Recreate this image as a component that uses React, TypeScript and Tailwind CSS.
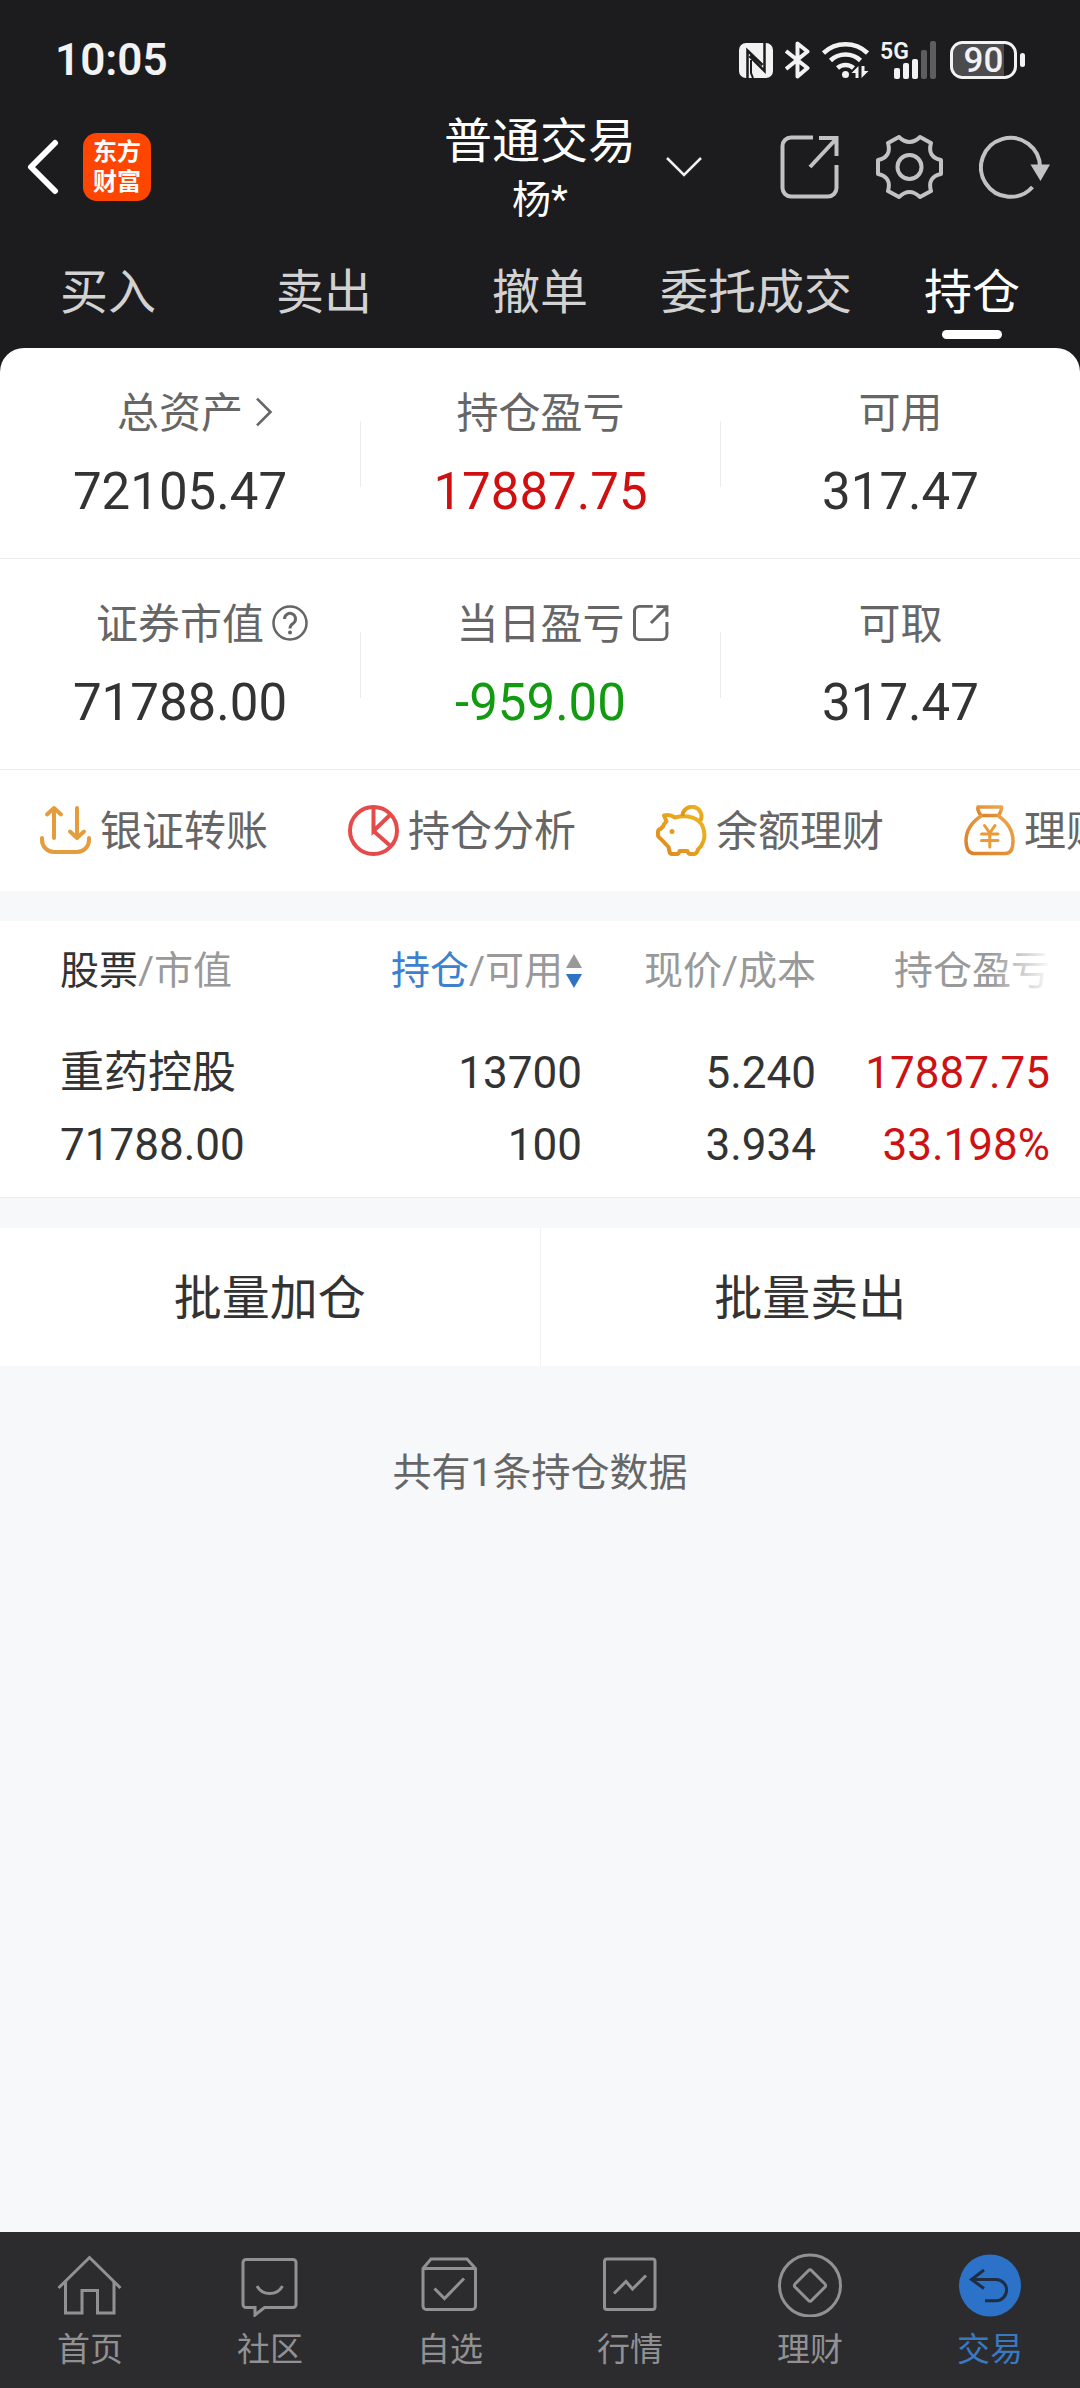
import { useState, type ReactNode } from "react";
import clsx from "clsx";

const tabs = ["买入", "卖出", "撤单", "委托成交", "持仓"];

const summary = [
  [
    { label: "总资产", value: "72105.47", color: "text-[#333]", icon: <ChevronRight /> },
    { label: "持仓盈亏", value: "17887.75", color: "text-[#d01010]", icon: null },
    { label: "可用", value: "317.47", color: "text-[#333]", icon: null },
  ],
  [
    { label: "证券市值", value: "71788.00", color: "text-[#333]", icon: <HelpIcon /> },
    { label: "当日盈亏", value: "-959.00", color: "text-[#129a10]", icon: <ShareIcon className="w-9 h-9 ml-2 mb-1" strokeWidth={5} /> },
    { label: "可取", value: "317.47", color: "text-[#333]", icon: null },
  ],
];

const actions = [
  { label: "银证转账", icon: <TransferIcon /> },
  { label: "持仓分析", icon: <PieIcon /> },
  { label: "余额理财", icon: <PigIcon /> },
  { label: "理财产品", icon: <BagIcon /> },
];

const positions = [
  {
    name: "重药控股",
    marketValue: "71788.00",
    amount: "13700",
    available: "100",
    price: "5.240",
    cost: "3.934",
    profit: "17887.75",
    profitRate: "33.198%",
  },
];

const navItems = [
  {
    label: "首页",
    icon: (
      <>
        <path d="M1.5 35 32.5 4.5 63.5 35" />
        <path d="M8.5 29V60H25V37.5H40.5V60H57V29" />
      </>
    ),
  },
  {
    label: "社区",
    icon: (
      <>
        <path d="M9 6.5H56a3 3 0 0 1 3 3V51.5a3 3 0 0 1-3 3H27.5L18 62V54.5H9a3 3 0 0 1-3-3V9.5a3 3 0 0 1 3-3Z" />
        <path d="M20 33a14.5 14.5 0 0 0 25.5 0" />
      </>
    ),
  },
  {
    label: "自选",
    icon: (
      <>
        <path d="M6 15.5 14 6H50L58.5 15.5V53a3.5 3.5 0 0 1-3.5 3.5H9.5A3.5 3.5 0 0 1 6 53ZM6 15.5H58.5" />
        <path d="M17.5 35.5 27.5 45.5 47 25.5" />
      </>
    ),
  },
  {
    label: "行情",
    icon: (
      <>
        <rect x="7.5" y="6" width="50.5" height="50.5" rx="2.5" />
        <path d="M17 40.5 29 28.5 35.5 36 49 22.5" />
      </>
    ),
  },
  {
    label: "理财",
    icon: (
      <>
        <circle cx="33" cy="32.5" r="30.5" />
        <path d="M31.5 17.5a2 2 0 0 1 3 0L48 31a2 2 0 0 1 0 3L34.5 47.5a2 2 0 0 1-3 0L18 34a2 2 0 0 1 0-3Z" />
      </>
    ),
  },
  {
    label: "交易",
    icon: (
      <>
        <circle cx="33" cy="32.5" r="31" fill="#2b72c8" stroke="none" />
        <path d="M27 17 14.5 26.5 27 35.5M15 26.5H39a10.6 10.6 0 0 1 0 21.2H28" stroke="#1f2d42" />
      </>
    ),
  },
];

function ChevronRight() {
  return (
    <svg viewBox="0 0 16 28" className="w-[18px] h-[30px] ml-3 mb-1" fill="none" stroke="#666" strokeWidth="2.5">
      <path d="M1.5 1.5 14 14 1.5 26.5" />
    </svg>
  );
}

function HelpIcon() {
  return (
    <svg viewBox="0 0 36 36" className="w-9 h-9 ml-2 mb-1" fill="none" stroke="#666" strokeWidth="2.5">
      <circle cx="18" cy="18" r="16.5" />
      <path d="M12.5 14a5.5 5.5 0 1 1 8.5 4.5Q18 20.5 18 23.5" strokeWidth="3" />
      <circle cx="18" cy="27.5" r="2" fill="#666" stroke="none" />
    </svg>
  );
}

function ShareIcon({ className, strokeWidth = 4 }: { className?: string; strokeWidth?: number }) {
  return (
    <svg viewBox="0 0 60 64" preserveAspectRatio="none" className={className} fill="none" stroke="currentColor" strokeWidth={strokeWidth}>
      <path d="M33 2.5H11a8.5 8.5 0 0 0-8.5 8.5V53a8.5 8.5 0 0 0 8.5 8.5H48a8.5 8.5 0 0 0 8.5-8.5V30" />
      <path d="M39 3H56.5V21M56 4 30 32" />
    </svg>
  );
}

function TransferIcon() {
  return (
    <svg viewBox="0 0 51 51" className="w-[51px] h-[51px]" fill="none" stroke="#e59c3c" strokeWidth="4" strokeLinecap="round" strokeLinejoin="round">
      <path d="M2 33v2a12 12 0 0 0 12 12H37a12 12 0 0 0 12-12v-2" />
      <path d="M14 33V3M7 9.5 14 3 21 9.5M37 3V33M30 26.5 37 33 44 26.5" />
    </svg>
  );
}

function PieIcon() {
  return (
    <svg viewBox="0 0 51 51" className="w-[51px] h-[51px]" fill="none" stroke="#e64b4b" strokeWidth="4">
      <circle cx="25.5" cy="25.5" r="23.5" />
      <path d="M25.5 2V26L42.5 9.5M25.5 26 42.5 41" />
    </svg>
  );
}

function PigIcon() {
  return (
    <svg viewBox="0 0 51 51" className="w-[51px] h-[51px]" fill="none" stroke="url(#pig)" strokeWidth="4" strokeLinejoin="round">
      <defs>
        <linearGradient id="pig" x1="1" y1="0" x2="0" y2="1">
          <stop offset="0" stopColor="#ecb820" />
          <stop offset="1" stopColor="#e0871e" />
        </linearGradient>
      </defs>
      <path d="M8 10.5Q14 9 19 12.5 26 10.5 32 11.5 42 13 46 20 50 28 47.5 36 46 41 42 44.5L41.5 46Q40 49 38 49H34.5Q32 49 31.5 46H23.5Q23 49 21 49H16Q14 49 13.5 46.5L12.5 42 4.5 33.5Q2 32 2 30V27Q2 24.5 4.5 24L7 21.5Q8 18.5 10.5 16.5Z" />
      <path d="M26.5 11a9.5 9.5 0 1 1 18 4.5" />
      <circle cx="16" cy="26.5" r="2.5" fill="#e59a20" stroke="none" />
    </svg>
  );
}

function BagIcon() {
  return (
    <svg viewBox="0 0 51 51" className="w-[51px] h-[51px]" fill="none" stroke="url(#bag)" strokeWidth="3.5" strokeLinejoin="round" strokeLinecap="round">
      <defs>
        <linearGradient id="bag" x1="1" y1="0" x2="0" y2="1">
          <stop offset="0" stopColor="#eda64a" />
          <stop offset="1" stopColor="#dc7f28" />
        </linearGradient>
      </defs>
      <path d="M14 2H37.5Q38 5 34.5 10.5H17Q13 5 14 2Z" />
      <path d="M17 11Q2 21 2 36 2.5 48.5 10 48.5H41.5Q49 48.5 49 36 49 21 34.5 11" />
      <path d="M20.5 20.5 25.8 28 31 20.5M17.5 29H34M17.5 35.5H34M25.8 29V42" stroke="#ec9a35" strokeWidth="3" />
    </svg>
  );
}

function StatusBar() {
  return (
    <div className="h-[108px] pt-3 pl-[55px] pr-[54px] flex items-center justify-between text-[#f2f2f2]">
      <span className="text-[44px] font-semibold">10:05</span>
      <div className="flex items-center gap-3">
        <svg viewBox="0 0 34 35" className="w-[34px] h-[35px]">
          <rect width="34" height="35" rx="7" fill="#f2f2f2" />
          <path d="M8.5 35V7.5L23.5 22M25.5 0V28L10.5 13" fill="none" stroke="#1c1c1e" strokeWidth="2.5" />
          <path d="M12 17V30L14 35" fill="none" stroke="#1c1c1e" strokeWidth="2" />
        </svg>
        <svg viewBox="0 0 25 38" className="w-[25px] h-[38px]" fill="none" stroke="currentColor" strokeWidth="4" strokeLinejoin="round">
          <path d="M1 10 22.5 27 12.5 35.5V2.5L22.5 10.5 1 28" />
        </svg>
        <svg viewBox="0 0 47 38" className="w-[47px] h-[38px]" fill="none" stroke="currentColor" strokeWidth="4.5">
          <path d="M1.5 12a32 32 0 0 1 44 0M8.5 19.5a22 22 0 0 1 30 0M15.5 27a12 12 0 0 1 16 0" />
          <circle cx="23.5" cy="33.5" r="3.5" fill="currentColor" stroke="none" />
          <path d="M36.5 25V37h-3v-5h-4ZM39.5 37V25h3v5h4Z" fill="currentColor" stroke="none" />
        </svg>
        <svg viewBox="0 0 57 38" className="w-[57px] h-[38px] overflow-visible" fill="currentColor">
          <text x="-1" y="18" fontSize="23" fontWeight="600">5G</text>
          <rect x="13" y="27" width="6" height="11" rx="2" />
          <rect x="22" y="22" width="6" height="16" rx="2" />
          <rect x="31" y="18" width="6" height="20" rx="2" />
          <rect x="40" y="9" width="6" height="29" rx="2" fill="#5d5d5f" />
          <rect x="49" y="0" width="6" height="38" rx="2" fill="#5d5d5f" />
        </svg>
        <svg viewBox="0 0 76 38" className="w-[76px] h-[38px] overflow-visible" fill="currentColor">
          <path d="M13 3H54V35H13A10 10 0 0 1 3 25V13A10 10 0 0 1 13 3Z" fill="#4b4b4d" />
          <rect x="1.5" y="1.5" width="64" height="35" rx="11" fill="none" stroke="currentColor" strokeWidth="3" />
          <rect x="70" y="12" width="5" height="14" rx="2.5" />
          <text x="33.5" y="31" fontSize="35" fontWeight="500" textAnchor="middle">90</text>
        </svg>
      </div>
    </div>
  );
}

function Header() {
  return (
    <header className="grid grid-cols-[1fr_auto_1fr] items-center">
      <div className="flex items-center gap-6 pl-[27px]">
        <button type="button" aria-label="返回">
          <svg viewBox="0 0 32 56" className="w-8 h-14" fill="none" stroke="#fff" strokeWidth="6" strokeLinecap="round">
            <path d="M28 4 4 28 28 52" strokeLinejoin="round" />
          </svg>
        </button>
        <div className="w-[68px] h-[68px] rounded-[14px] bg-[#ff4600] text-white text-[24px] leading-[30px] font-bold flex flex-col items-center justify-center">
          <span>东方</span>
          <span>财富</span>
        </div>
      </div>
      <div className="pt-[2px] text-center text-white">
        <h1 className="text-[48px] leading-[64px]">普通交易</h1>
        <p className="text-[39px] leading-[52px]">杨*</p>
      </div>
      <div className="flex items-center justify-between pl-[30px] pr-[30px] text-[#c2c2c2]">
        <button type="button" aria-label="切换账户">
          <svg viewBox="0 0 36 20" className="w-9 h-5" fill="none" stroke="#eee" strokeWidth="2.5">
            <path d="M1 1 18 18 35 1" />
          </svg>
        </button>
        <div className="flex items-center gap-9">
          <button type="button" aria-label="分享">
            <ShareIcon className="w-[60px] h-16" />
          </button>
          <button type="button" aria-label="设置">
            <svg viewBox="0 0 67 64" className="w-[67px] h-16" fill="none" stroke="currentColor" strokeWidth="4" strokeLinejoin="round">
              <path d="M23 2Q33.5 12 44 2L55 8Q51 22 65 25V39Q51 42 55 56L44 62Q33.5 52 23 62L12 56Q16 42 2 39V25Q16 22 12 8Z" />
              <circle cx="33.5" cy="32" r="12" />
            </svg>
          </button>
          <button type="button" aria-label="刷新">
            <svg viewBox="0 0 71 64" className="w-[71px] h-16" fill="none" stroke="currentColor" strokeWidth="4">
              <path d="M53.5 52A29.5 29.5 0 1 1 61 32" />
              <path d="M51.5 29.5H71L61.5 46Z" fill="currentColor" stroke="none" />
            </svg>
          </button>
        </div>
      </div>
    </header>
  );
}

function SummaryCell({ label, value, color, icon }: { label: string; value: string; color: string; icon: ReactNode }) {
  return (
    <div className="flex-1 flex flex-col items-center pt-9">
      <div className="w-full grid grid-cols-[1fr_auto_1fr] items-center text-[42px] leading-[60px] text-[#666]">
        <span />
        <span>{label}</span>
        {icon}
      </div>
      <div className={clsx("mt-4 text-[51px] leading-[64px]", color)}>{value}</div>
    </div>
  );
}

export default function App() {
  const [activeTab, setActiveTab] = useState("持仓");

  return (
    <div className="min-h-screen flex flex-col bg-[#f7f8fa] font-['Roboto','Noto_Sans_CJK_SC',sans-serif]">
      <div className="bg-[#1c1c1e]">
        <StatusBar />
        <Header />

        {/* Tabs */}
        <div className="flex">
          {tabs.map((tab) => (
            <button
              key={tab}
              type="button"
              onClick={() => setActiveTab(tab)}
              className={clsx(
                "flex-1 flex flex-col items-center pt-[34px] pb-[9px] text-[48px] leading-[66px]",
                tab === activeTab ? "text-white" : "text-[#d2d2d2]"
              )}
            >
              <span className="whitespace-nowrap">{tab}</span>
              <span className={clsx("mt-1 w-[60px] h-[9px] rounded-full", tab === activeTab && "bg-white")} />
            </button>
          ))}
        </div>

        {/* Asset summary */}
        <div className="bg-white rounded-t-[24px]">
          {summary.map((row, i) => (
            <div key={i} className="h-[211px] flex border-b border-[#ececec]">
              {row.map((cell, j) => (
                <div key={cell.label} className="flex-1 flex">
                  {j > 0 && <div className="w-px h-[66px] mt-[73px] bg-[#ececec]" />}
                  <SummaryCell {...cell} />
                </div>
              ))}
            </div>
          ))}
        </div>
      </div>

      {/* Quick actions */}
      <div className="h-[121px] flex items-center bg-white pl-10 overflow-hidden">
        {actions.map((a) => (
          <button key={a.label} type="button" className="w-[308px] shrink-0 flex items-center gap-[9px] text-[42px] leading-[60px] text-[#666] whitespace-nowrap">
            {a.icon}
            <span className="pt-[3px]">{a.label}</span>
          </button>
        ))}
      </div>

      {/* Positions */}
      <div className="relative mt-[30px] bg-white border-b border-[#ececec] pl-[60px] pr-[30px]">
        <table className="w-full table-fixed text-right whitespace-nowrap">
          <thead>
            <tr className="h-24 text-[39px] leading-[54px] text-[#999]">
              <th className="pt-[3px] font-normal text-left">
                <span className="text-[#333]">股票</span>/市值
              </th>
              <th className="w-[234px] pt-[3px] font-normal">
                <button type="button" className="w-full flex items-center justify-end gap-[3px]">
                  <span>
                    <span className="text-[#3d80cf]">持仓</span>/可用
                  </span>
                  <svg viewBox="0 0 16 34" className="w-4 h-[34px] shrink-0">
                    <path d="M8 0 16 14H0Z" fill="#999" />
                    <path d="M0 20H16L8 34Z" fill="#2f74c4" />
                  </svg>
                </button>
              </th>
              <th className="w-[234px] pt-[3px] font-normal">现价/成本</th>
              <th className="w-[234px] pt-[3px] font-normal">持仓盈亏</th>
            </tr>
          </thead>
          <tbody>
            {positions.map((p) => (
              <tr key={p.name} className="text-[44px] leading-[72px] text-[#333]">
                <td className="pt-5 pb-4 text-left">
                  <div>{p.name}</div>
                  <div>{p.marketValue}</div>
                </td>
                <td className="pt-5 pb-4">
                  <div>{p.amount}</div>
                  <div>{p.available}</div>
                </td>
                <td className="pt-5 pb-4">
                  <div>{p.price}</div>
                  <div>{p.cost}</div>
                </td>
                <td className="pt-5 pb-4 text-[#cc1212]">
                  <div>{p.profit}</div>
                  <div>{p.profitRate}</div>
                </td>
              </tr>
            ))}
          </tbody>
        </table>
        <div className="absolute top-0 right-0 w-[90px] h-24 bg-linear-to-r from-white/0 to-white to-70% pointer-events-none" />
      </div>

      <div className="mt-[30px] h-[138px] flex bg-white text-[48px] text-[#333]">
        <button type="button" className="flex-1 pt-[3px]">批量加仓</button>
        <button type="button" className="flex-1 pt-[3px] border-l border-[#f2f2f2]">批量卖出</button>
      </div>

      <p className="mt-[77px] text-center text-[39px] leading-[60px] text-[#666]">共有1条持仓数据</p>

      {/* Bottom nav */}
      <nav className="mt-auto flex bg-[#2c2c2e]">
        {navItems.map((item) => (
          <a
            key={item.label}
            href="#"
            className={clsx(
              "flex-1 flex flex-col items-center pt-[21px] pb-4 text-[33px] leading-[44px]",
              item.label === "交易" ? "text-[#3a78c0]" : "text-[#919194]"
            )}
          >
            <svg viewBox="0 0 66 64" className="w-[66px] h-16 mb-[11px]" fill="none" stroke="currentColor" strokeWidth="3">
              {item.icon}
            </svg>
            {item.label}
          </a>
        ))}
      </nav>
    </div>
  );
}
